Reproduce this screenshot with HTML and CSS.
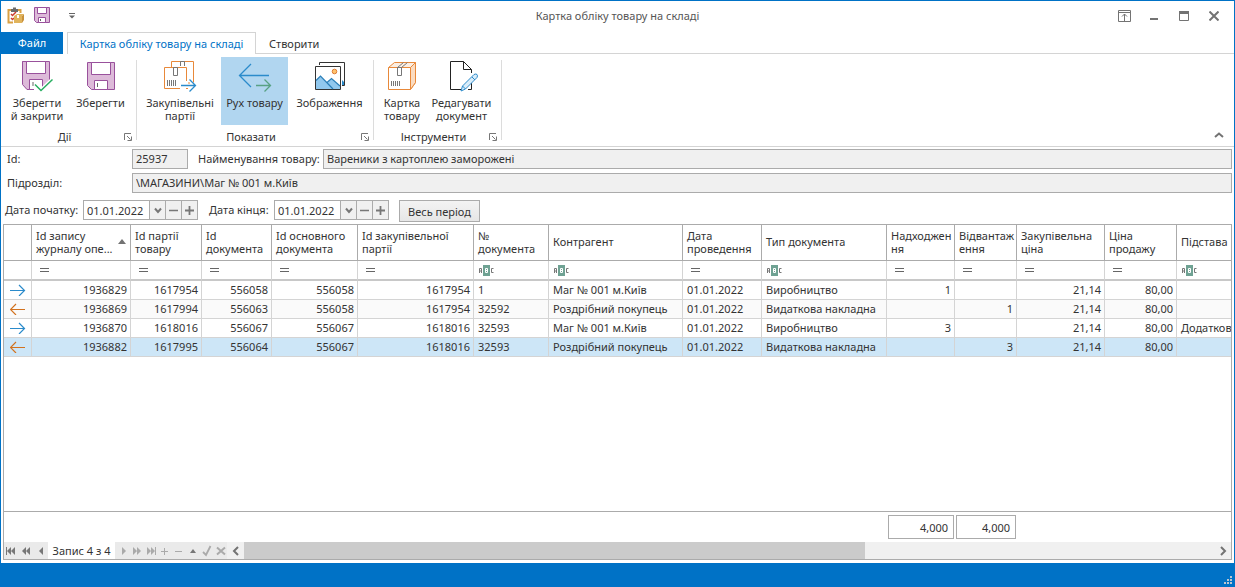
FILE: index.html
```
<!DOCTYPE html>
<html lang="uk">
<head>
<meta charset="utf-8">
<title>Картка обліку товару на складі</title>
<link rel="stylesheet" href="styles.css">
</head>
<body>
<svg class="defs" aria-hidden="true">
  <symbol id="launcher" viewBox="0 0 8 8"><path d="M7 .5H.5V7M3 3l3.500 3.500M7.500 3.500V7.500H3.500" fill="none" stroke="#777"/></symbol>
  <symbol id="eq" viewBox="0 0 10 6"><path d="M0 1.500h9M0 4.500h9" stroke="#666" fill="none"/></symbol>
  <symbol id="abc" viewBox="0 0 17 11"><rect x="5" width="7" height="11" fill="#6fa293"/><path d="M1.500 8V3.500H3.500V8M2 6H3M15.500 3.500H13.500V7.500H15.500" fill="none" stroke="#777"/><path d="M7.500 3.500h2v4h-2zM7.500 5.500h2" fill="none" stroke="#fff"/></symbol>
  <symbol id="in" viewBox="0 0 16 12"><path d="M0 6.500H14.500M9 1L14.500 6.500L9 12" fill="none" stroke="#2b8bcb" stroke-width="1.200"/></symbol>
  <symbol id="out" viewBox="0 0 16 12"><path d="M15 6.500H.5M6 1L.5 6.500L6 12" fill="none" stroke="#d2721f" stroke-width="1.200"/></symbol>
  <symbol id="down" viewBox="0 0 8 7"><path d="M1 1.500L4 5L7 1.500" fill="none" stroke="#777" stroke-width="2"/></symbol>
  <symbol id="minus" viewBox="0 0 9 9"><path d="M0 4.500H9" stroke="#777" stroke-width="1.500"/></symbol>
  <symbol id="plus" viewBox="0 0 9 9"><path d="M0 4.500H9M4.500 0V9" stroke="#777" stroke-width="1.800"/></symbol>
</svg>
<div class="window">
  <header class="titlebar">
    <div class="quick">
      <button aria-label="Картка">
        <svg width="18" height="18" viewBox="0 0 18 18"><path d="M4 3H1.500V15.500H6M10 3H13.500V6" fill="none" stroke="#d9a043" stroke-width="2"/><path d="M4 2h2V.5h3V2h2v3H4z" fill="#6b6b6b"/><path d="M4 7l1.500 1.500L9 5M4 11l1.500 1.500L7 11" fill="none" stroke="#cc3d32" stroke-width="1.500"/><path d="M7 9l3-2h7l-2 2v7H7z" fill="#e0b35c"/><path d="M15 9l2-2v6l-2 3z" fill="#c8913b"/><path d="M10 8h2v3h-2z" fill="#fff"/></svg>
      </button>
      <button aria-label="Зберегти">
        <svg width="18" height="18" viewBox="0 0 18 18"><path d="M1.500 .5h15v15h-13l-2-2z" fill="#ddbad9" stroke="#99519c"/><path d="M4.500 .5h9v6h-9z" fill="#fff" stroke="#99519c"/><path d="M5.500 15.500v-5h7v5z" fill="#fff" stroke="#99519c"/><path d="M7.500 12v2" stroke="#666"/></svg>
      </button>
      <button class="quick-more" aria-label="Налаштувати панель">
        <svg width="6" height="6" viewBox="0 0 6 6"><path d="M0 .5h6" stroke="#666"/><path d="M0 2.500h6L3 5.500z" fill="#666"/></svg>
      </button>
    </div>
    <h1>Картка обліку товару на складі</h1>
    <div class="controls">
      <button aria-label="Параметри стрічки"><svg width="13" height="12" viewBox="0 0 13 12"><path d="M.5 .5h12v11H.5zM.5 2.500h12M6.500 11V4M4 6.500L6.500 4L9 6.500" fill="none" stroke="#737373"/></svg></button>
      <button aria-label="Згорнути"><svg width="10" height="10" viewBox="0 0 10 10"><path d="M1 8h8" stroke="#737373" stroke-width="2"/></svg></button>
      <button aria-label="Розгорнути"><svg width="10" height="10" viewBox="0 0 10 10"><path d="M.5 .5h9v9h-9z" fill="none" stroke="#737373"/><path d="M0 1.500h10" stroke="#737373" stroke-width="3"/></svg></button>
      <button aria-label="Закрити"><svg width="10" height="10" viewBox="0 0 10 10"><path d="M.5 .5l9 9M9.500 .5l-9 9" stroke="#737373" stroke-width="2"/></svg></button>
    </div>
  </header>

  <nav class="tabs">
    <button class="tab file">Файл</button>
    <button class="tab active">Картка обліку товару на складі</button>
    <button class="tab">Створити</button>
  </nav>

  <section class="ribbon">
    <div class="group">
      <div class="tools">
        <button class="tool w64">
          <svg viewBox="19 59 36 36"><path d="M22.500 61.500h27v25h-23.500l-3.500-3z" fill="#ddbad9" stroke="#99519c"/><path d="M22.500 84l4 5.500H31V80" fill="#ddbad9"/><path d="M22.500 61.500V84.500L27 89.500H36" fill="none" stroke="#99519c"/><path d="M26.500 61.500h19v12h-19zM29.500 89.500v-10h13v10z" fill="#fff" stroke="#99519c"/><path d="M33 82v4" stroke="#666"/><path d="M34 83L41 91L54 79V95H34z" fill="#fff"/><path d="M35 84.500L41 90.500L52.500 79.500" fill="none" stroke="#fff" stroke-width="4"/><path d="M35 84.500L41 90.500L52.500 79.500" fill="none" stroke="#27ae60" stroke-width="1.500"/></svg>
          <span>Зберегти<br>й закрити</span>
        </button>
        <button class="tool w63">
          <svg viewBox="83 59 36 36"><path d="M87.500 62.500h27v27h-23l-4-4z" fill="#ddbad9" stroke="#99519c"/><path d="M91.500 62.500h19v12h-19zM94.500 89.500v-9h13v9z" fill="#fff" stroke="#99519c"/><path d="M97.500 83v4" stroke="#666"/></svg>
          <span>Зберегти</span>
        </button>
      </div>
      <div class="caption"><span>Дії</span><button aria-label="Дії: параметри"><svg width="8" height="8"><use href="#launcher"/></svg></button></div>
    </div>
    <div class="group">
      <div class="tools">
        <button class="tool w78">
          <svg viewBox="162 59 36 36"><path d="M171.500 67V61.500h22v21M189 82v2" fill="none" stroke="#e8893a"/><path d="M180.500 66v-4.500h4v4.500M173.500 67" fill="none" stroke="#777"/><path d="M180 88.500H164.500v-21h22V81M186 88.500h2" fill="none" stroke="#e8893a"/><path d="M173.500 67.500h4v8h-4z" fill="none" stroke="#777"/><path d="M167.500 80v6M169.500 80v6M171.500 80v6M173.500 80v6M175.500 80v6" stroke="#777"/><path d="M181 85.500h14M189.500 79.500l6 6l-6 6" fill="none" stroke="#2b8bcb" stroke-width="1.300"/></svg>
          <span>Закупівельні<br>партії</span>
        </button>
        <button class="tool w67 selected">
          <svg viewBox="236 59 36 36"><path d="M268 75.500H239M250 64L238.500 75.500L250 87" fill="none" stroke="#2b8bcb" stroke-width="1.300"/><path d="M255 85.500h14M263.500 79.500l6 6l-6 6" fill="none" stroke="#58a184" stroke-width="1.300"/></svg>
          <span>Рух товару</span>
        </button>
        <button class="tool w79">
          <svg viewBox="311 59 36 36"><path d="M318.500 65v-2.500h25v23H341" fill="none" stroke="#333"/><path d="M341 80l2 2v3h-2z" fill="#2b8bcb"/><path d="M314.500 66.500h25v23h-25z" fill="#fff" stroke="#333"/><path d="M315 80.500L319.500 76L326 82.500L330.500 78.500L339 86V89H315z" fill="#91c8ee"/><path d="M315 80.500L319.500 76L332 89M326 82.500L330.500 78.500L339 86" fill="none" stroke="#2b7fb8" stroke-width="1.200"/><circle cx="333.500" cy="71.500" r="2.300" fill="#ffc36c" stroke="#df7c35"/></svg>
          <span>Зображення</span>
        </button>
      </div>
      <div class="caption"><span>Показати</span><button aria-label="Показати: параметри"><svg width="8" height="8"><use href="#launcher"/></svg></button></div>
    </div>
    <div class="group">
      <div class="tools">
        <button class="tool w48">
          <svg viewBox="384 59 36 36"><path d="M388.500 67.500l6-5h21v20l-5 7" fill="#fbeee2" stroke="#e8893a"/><path d="M410.500 67.500l5-5v20l-5 7z" fill="#fbdcc1" stroke="#e8893a"/><path d="M388.500 67.500h22v22h-22z" fill="#fff" stroke="#e8893a"/><path d="M397.500 67.500l6-5M401.500 67.500l6-5M397.500 67.500h4v8h-4z" fill="none" stroke="#777"/><path d="M391.500 81v5M393.500 81v5M395.500 81v5M397.500 81v5M399.500 81v5" stroke="#777"/></svg>
          <span>Картка<br>товару</span>
        </button>
        <button class="tool w71">
          <svg viewBox="444 59 36 36"><path d="M461 89.500H450.500v-28h13l8 8V73M471.500 83v6.500H468" fill="none" stroke="#222"/><path d="M463.500 61.500v8h8" fill="none" stroke="#222"/><path d="M461 91l1.500-5L474 74.500q2-1 3 0t0 3L465.500 89z" fill="#d9ecf9" stroke="#2b8bcb"/><path d="M472 77l3 3M462.500 86l3 3" stroke="#2b8bcb"/></svg>
          <span>Редагувати<br>документ</span>
        </button>
      </div>
      <div class="caption"><span>Інструменти</span><button aria-label="Інструменти: параметри"><svg width="8" height="8"><use href="#launcher"/></svg></button></div>
    </div>
    <button class="collapse" aria-label="Згорнути стрічку"><svg width="10" height="6" viewBox="0 0 10 6"><path d="M1 5L5 1.500L9 5" fill="none" stroke="#737373" stroke-width="2"/></svg></button>
  </section>

  <main>
    <form class="fields">
      <div class="field-row">
        <label class="field-label" for="id">Id:</label>
        <input class="ro short" id="id" value="25937" readonly>
        <label class="field-label name" for="name">Найменування товару:</label>
        <input class="ro wide" id="name" value="Вареники з картоплею заморожені" readonly>
      </div>
      <div class="field-row">
        <label class="field-label" for="dept">Підрозділ:</label>
        <input class="ro wide" id="dept" value="\МАГАЗИНИ\Маг № 001 м.Київ" readonly>
      </div>
      <div class="dates">
        <label class="from" for="from">Дата початку:</label>
        <div class="date"><input id="from" value="01.01.2022"><button type="button" aria-label="Календар"><svg width="8" height="7"><use href="#down"/></svg></button><button type="button" aria-label="Менше"><svg width="9" height="9"><use href="#minus"/></svg></button><button type="button" aria-label="Більше"><svg width="9" height="9"><use href="#plus"/></svg></button></div>
        <label class="to" for="to">Дата кінця:</label>
        <div class="date"><input id="to" value="01.01.2022"><button type="button" aria-label="Календар"><svg width="8" height="7"><use href="#down"/></svg></button><button type="button" aria-label="Менше"><svg width="9" height="9"><use href="#minus"/></svg></button><button type="button" aria-label="Більше"><svg width="9" height="9"><use href="#plus"/></svg></button></div>
        <button type="button" class="period">Весь період</button>
      </div>
    </form>

    <div class="grid">
      <div class="rows">
        <table>
          <colgroup><col class="c28"><col class="c99"><col class="c71"><col class="c70"><col class="c86"><col class="c116"><col class="c75"><col class="c134"><col class="c79"><col class="c125"><col class="c68"><col class="c62"><col class="c88"><col class="c72"><col></colgroup>
          <thead>
            <tr class="head"><th></th><th><div class="sorted"><span>Id запису<br>журналу опе...</span><svg width="8" height="5" viewBox="0 0 8 5"><path d="M0 5L4 0L8 5z" fill="#737373"/></svg></div></th><th>Id партії<br>товару</th><th>Id<br>документа</th><th>Id основного<br>документа</th><th>Id закупівельної<br>партії</th><th>№<br>документа</th><th>Контрагент</th><th>Дата<br>проведення</th><th>Тип документа</th><th>Надходжен<br>ня</th><th>Відвантаж<br>ення</th><th>Закупівельна<br>ціна</th><th>Ціна<br>продажу</th><th>Підстава</th></tr>
            <tr class="filter"><td></td><td><svg class="eq"><use href="#eq"/></svg></td><td><svg class="eq"><use href="#eq"/></svg></td><td><svg class="eq"><use href="#eq"/></svg></td><td><svg class="eq"><use href="#eq"/></svg></td><td><svg class="eq"><use href="#eq"/></svg></td><td><svg class="abc"><use href="#abc"/></svg></td><td><svg class="abc"><use href="#abc"/></svg></td><td><svg class="eq"><use href="#eq"/></svg></td><td><svg class="abc"><use href="#abc"/></svg></td><td><svg class="eq"><use href="#eq"/></svg></td><td><svg class="eq"><use href="#eq"/></svg></td><td><svg class="eq"><use href="#eq"/></svg></td><td><svg class="eq"><use href="#eq"/></svg></td><td><svg class="abc"><use href="#abc"/></svg></td></tr>
          </thead>
          <tbody>
            <tr><td class="dir"><svg><use href="#in"/></svg></td><td class="n">1936829</td><td class="n">1617954</td><td class="n">556058</td><td class="n">556058</td><td class="n">1617954</td><td>1</td><td>Маг № 001 м.Київ</td><td>01.01.2022</td><td>Виробництво</td><td class="n">1</td><td class="n"></td><td class="n">21,14</td><td class="n">80,00</td><td></td></tr>
            <tr class="even"><td class="dir"><svg><use href="#out"/></svg></td><td class="n">1936869</td><td class="n">1617994</td><td class="n">556063</td><td class="n">556058</td><td class="n">1617954</td><td>32592</td><td>Роздрібний покупець</td><td>01.01.2022</td><td>Видаткова накладна</td><td class="n"></td><td class="n">1</td><td class="n">21,14</td><td class="n">80,00</td><td></td></tr>
            <tr><td class="dir"><svg><use href="#in"/></svg></td><td class="n">1936870</td><td class="n">1618016</td><td class="n">556067</td><td class="n">556067</td><td class="n">1618016</td><td>32593</td><td>Маг № 001 м.Київ</td><td>01.01.2022</td><td>Виробництво</td><td class="n">3</td><td class="n"></td><td class="n">21,14</td><td class="n">80,00</td><td>Додатков</td></tr>
            <tr class="current"><td class="dir"><svg><use href="#out"/></svg></td><td class="n">1936882</td><td class="n">1617995</td><td class="n">556064</td><td class="n">556067</td><td class="n">1618016</td><td>32593</td><td>Роздрібний покупець</td><td>01.01.2022</td><td>Видаткова накладна</td><td class="n"></td><td class="n">3</td><td class="n">21,14</td><td class="n">80,00</td><td></td></tr>
          </tbody>
        </table>
      </div>
      <div class="totals">
        <table>
          <colgroup><col class="c28"><col class="c99"><col class="c71"><col class="c70"><col class="c86"><col class="c116"><col class="c75"><col class="c134"><col class="c79"><col class="c125"><col class="c68"><col class="c62"><col class="c88"><col class="c72"><col></colgroup>
          <tbody><tr><td colspan="10"></td><td><div class="sum">4,000</div></td><td><div class="sum">4,000</div></td><td colspan="3"></td></tr></tbody>
        </table>
      </div>
      <div class="navigator">
        <div class="nav-part">
          <button aria-label="Перший"><svg viewBox="0 0 10 8"><path d="M.5 0V8" stroke="#777"/><path d="M5 0V8L1 4zM9 0V8L5 4z" fill="#777"/></svg></button>
          <button aria-label="Попередня сторінка"><svg viewBox="0 0 10 8"><path d="M5 0V8L1 4zM9 0V8L5 4z" fill="#777"/></svg></button>
          <button aria-label="Попередній"><svg viewBox="0 0 10 8"><path d="M7 0V8L3 4z" fill="#777"/></svg></button>
        </div>
        <div class="position">Запис 4 з 4</div>
        <div class="nav-part edit">
          <button aria-label="Наступний"><svg viewBox="0 0 10 8"><path d="M4 0V8L8 4z" fill="#aaa"/></svg></button>
          <button aria-label="Наступна сторінка"><svg viewBox="0 0 10 8"><path d="M1 0V8L5 4zM5 0V8L9 4z" fill="#aaa"/></svg></button>
          <button aria-label="Останній"><svg viewBox="0 0 10 8"><path d="M9.500 0V8" stroke="#aaa"/><path d="M1 0V8L5 4zM5 0V8L9 4z" fill="#aaa"/></svg></button>
          <button aria-label="Додати"><svg viewBox="0 0 10 8"><path d="M1 4.500H8M4.500 1V8" stroke="#aaa"/></svg></button>
          <button aria-label="Видалити"><svg viewBox="0 0 10 8"><path d="M1 4.500H8" stroke="#aaa"/></svg></button>
          <button aria-label="Редагувати"><svg viewBox="0 0 10 8"><path d="M2 6H8L5 2z" fill="#777"/></svg></button>
          <button aria-label="Зберегти зміни"><svg viewBox="0 0 10 8"><path d="M1 5L4 8L8.500 -1" fill="none" stroke="#aaa" stroke-width="1.800"/></svg></button>
          <button aria-label="Скасувати зміни"><svg viewBox="0 0 10 8"><path d="M1 .5L9 7.500M9 .5L1 7.500" stroke="#aaa" stroke-width="2"/></svg></button>
        </div>
        <div class="scroll">
          <button aria-label="Прокрутити ліворуч"><svg viewBox="0 0 10 8"><path d="M7 0L3 4L7 8" fill="none" stroke="#737373" stroke-width="2"/></svg></button>
          <div class="track"><div class="thumb"></div></div>
          <button aria-label="Прокрутити праворуч"><svg viewBox="0 0 10 8"><path d="M3 0L7 4L3 8" fill="none" stroke="#737373" stroke-width="2"/></svg></button>
        </div>
      </div>
    </div>
  </main>
  <footer class="status"><svg width="8" height="8" viewBox="0 0 8 8"><path d="M6 0h2v2H6zM3 3h2v2H3zM6 3h2v2H6zM0 6h2v2H0zM3 6h2v2H3zM6 6h2v2H6z" fill="#b9c6d2"/></svg></footer>
</div>
</body>
</html>
```
FILE: styles.css
```
* { box-sizing: border-box; }
html, body { height: 100%; margin: 0; }
body, button, input, table {
  font-family: "Noto Sans", "Open Sans", sans-serif;
  font-size: 11px;
  line-height: 13px;
  color: #333;
}
button { background: none; border: 0; padding: 0; margin: 0; }
button svg { display: block; }
.defs { display: none; }

.window {
  height: 100%;
  display: flex;
  flex-direction: column;
  background: #fff;
  border: 1px solid #0072c6;
  border-bottom: 0;
}

.titlebar {
  display: grid;
  grid-template-columns: 1fr auto 1fr;
  align-items: center;
  height: 31px;
  padding-bottom: 1px;
}
.titlebar h1 { margin: 0; padding-bottom: 1px; font-size: 11px; font-weight: 400; color: #555; }
.quick { display: flex; align-items: center; gap: 8px; padding-left: 6px; }
.quick-more { margin-left: 10px; }
.controls { display: flex; justify-content: flex-end; padding-right: 5px; }
.controls button { display: flex; width: 30px; height: 24px; align-items: center; justify-content: center; }

.tabs { display: flex; flex: none; height: 22px; }
.tab { padding: 1px 13px 0; border-bottom: 1px solid #d4d4d4; }
.tab.file { width: 62px; margin-right: 4px; background: #0072c6; border-color: #0072c6; color: #fff; padding-bottom: 1px; }
.tab.active { width: 189px; padding: 0 0 1px; border: 1px solid #d4d4d4; border-bottom: 0; color: #0072c6; }
.tabs::after { content: ""; flex: 1; border-bottom: 1px solid #d4d4d4; }

.ribbon { display: flex; flex: none; height: 93px; padding-top: 3px; border-bottom: 1px solid #d4d4d4; }
.group { display: flex; flex-direction: column; padding: 0 5px 0 4px; position: relative; }
.group::after { content: ""; position: absolute; right: 0; top: 3px; bottom: 6px; width: 1px; background: #dcdcdc; }
.tools { display: flex; flex: none; height: 68px; }
.tool { display: flex; flex-direction: column; align-items: center; padding-top: 2px; white-space: nowrap; }
.tool svg { width: 36px; height: 36px; margin-bottom: 1px; flex: none; }
.tool.selected { margin: 0 2px; background: #b1d6f0; }
.w48 { width: 48px; }
.w63 { width: 63px; }
.w64 { width: 64px; }
.w67 { width: 67px; }
.w71 { width: 71px; }
.w78 { width: 78px; }
.w79 { width: 79px; }
.caption { display: flex; flex: 1; align-items: center; padding-top: 2px; }
.caption span { flex: 1; text-align: center; }
.collapse { align-self: flex-end; margin: 0 10px 8px auto; }

main { flex: 1; min-height: 0; display: flex; flex-direction: column; padding: 2px 2px 3px; }
.fields { display: flex; flex-direction: column; gap: 4px; flex: none; margin: 0; }
.field-row { display: flex; align-items: center; padding-left: 4px; }
.field-label { flex: none; width: 125px; padding-bottom: 1px; }
.field-label.name { margin-left: 10px; }
.ro { height: 20px; padding: 0 3px 1px; border: 1px solid #ababab; background: #f0f0f0; min-width: 0; border-radius: 0; }
.short { width: 56px; }
.wide { flex: 1; }
.dates { display: flex; align-items: flex-start; padding: 3px 0 0 2px; height: 25px; }
.dates label { line-height: 20px; }
.from { width: 78px; }
.to { width: 65px; margin-left: 11px; }
.date { display: flex; height: 20px; border: 1px solid #ababab; }
.date input { width: 65px; border: 0; padding: 0 3px; background: #fff; }
.date button { display: flex; align-items: center; justify-content: center; width: 16px; border-left: 1px solid #ababab; background: #f0f0f0; }
.period { width: 81px; height: 22px; margin-left: 10px; border: 1px solid #ababab; background: linear-gradient(#f3f3f3, #e6e6e6); }

.grid { flex: 1; min-height: 0; display: flex; flex-direction: column; margin-top: 2px; border: 1px solid #ababab; }
.rows { flex: 1; min-height: 0; overflow: hidden; }
table { width: 100%; table-layout: fixed; border-collapse: separate; border-spacing: 0; }
.c28 { width: 28px; }
.c99 { width: 99px; }
.c71 { width: 71px; }
.c70 { width: 70px; }
.c86 { width: 86px; }
.c116 { width: 116px; }
.c75 { width: 75px; }
.c134 { width: 134px; }
.c79 { width: 79px; }
.c125 { width: 125px; }
.c68 { width: 68px; }
.c62 { width: 62px; }
.c88 { width: 88px; }
.c72 { width: 72px; }
th, td { overflow: hidden; white-space: nowrap; padding: 0 4px; text-align: left; font-weight: 400; }
th { height: 36px; padding: 0 4px 2px; border-right: 1px solid #ababab; border-bottom: 1px solid #ababab; }
.rows td { height: 19px; padding: 0 3px 2px 4px; border-right: 1px solid #d4d4d4; border-bottom: 1px solid #d4d4d4; }
.rows tr > :last-child { border-right: 0; padding-right: 0; }
.rows .filter td { height: 20px; padding-bottom: 0; border-bottom: 2px solid #c8c8c8; }
.sorted { display: flex; align-items: center; justify-content: space-between; }
.filter svg, .dir svg { display: block; }
.eq { width: 10px; height: 6px; margin-left: 4px; }
.abc { width: 17px; height: 11px; }
.rows .dir { padding: 0 6px; }
.dir svg { width: 16px; height: 12px; overflow: visible; }
.rows .n { text-align: right; }
.even td { background: #fafafa; }
.current td { background: #cde6f7; }

.totals { flex: none; border-top: 1px solid #ababab; }
.totals td { height: 30px; padding: 0 1px; }
.sum { height: 24px; padding: 5px; border: 1px solid #ababab; text-align: right; }

.navigator { display: flex; flex: none; height: 17px; background: #eaeaea; }
.nav-part { display: flex; padding: 0 2px; gap: 5px; align-items: center; }
.navigator svg { width: 10px; height: 8px; overflow: visible; }
.position { width: 67px; padding-top: 2px; background: #fff; text-align: center; white-space: nowrap; }
.edit { padding: 0 1px 0 3px; gap: 4px; }
.scroll { display: flex; flex: 1; background: #f0f0f0; }
.scroll button { display: flex; width: 17px; align-items: center; justify-content: center; }
.track { flex: 1; }
.thumb { width: 64%; height: 100%; background: #cbcbcb; }

.status { display: flex; flex: none; height: 24px; align-items: flex-end; justify-content: flex-end; padding: 0 2px 3px; background: #0072c6; }
```
